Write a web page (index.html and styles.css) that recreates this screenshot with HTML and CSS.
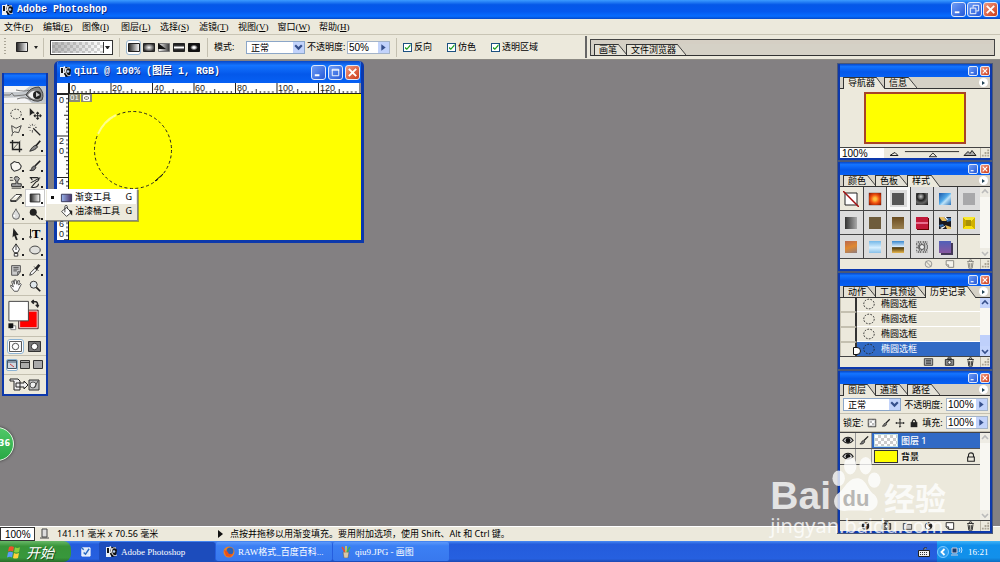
FILE: index.html
```html
<!DOCTYPE html>
<html lang="zh-CN">
<head>
<meta charset="utf-8">
<title>Adobe Photoshop</title>
<link rel="stylesheet" href="styles.css">
</head>
<body>
<svg class="defs" aria-hidden="true">
  <defs>
    <linearGradient id="bw"><stop offset="0" stop-color="#222"/><stop offset="1" stop-color="#fff"/></linearGradient>
    <linearGradient id="wb"><stop offset="0" stop-color="#fff"/><stop offset="1" stop-color="#333"/></linearGradient>
    <linearGradient id="blu"><stop offset="0" stop-color="#9ab8f0"/><stop offset="1" stop-color="#483068"/></linearGradient>
    <linearGradient id="refl" x2="0" y2="1"><stop offset="0" stop-color="#111"/><stop offset=".25" stop-color="#333"/><stop offset=".5" stop-color="#fff"/><stop offset=".75" stop-color="#333"/><stop offset="1" stop-color="#111"/></linearGradient>
    <radialGradient id="rad"><stop offset="0" stop-color="#fff"/><stop offset="1" stop-color="#333"/></radialGradient>
    <radialGradient id="dia"><stop offset=".2" stop-color="#fff"/><stop offset=".7" stop-color="#111"/></radialGradient>
    <pattern id="check" width="6" height="6" patternUnits="userSpaceOnUse"><path fill="#fff" d="M0 0h6v6H0z"/><path fill="#bbb" d="M0 0h3v3H0zM3 3h3v3H3z"/></pattern>
    <pattern id="ticks" width="41.5" height="11" patternUnits="userSpaceOnUse"><path stroke="#222" fill="none" d="M.5 0v11M4.6 8v3M8.8 8v3M12.9 8v3M17 8v3M21.2 6v5M25.3 8v3M29.5 8v3M33.6 8v3M37.8 8v3"/></pattern>
    <pattern id="vticks" width="12" height="41.5" patternUnits="userSpaceOnUse"><path stroke="#222" fill="none" d="M0 .5h12M9 4.6h3M9 8.8h3M9 12.9h3M9 17h3M7 21.2h5M9 25.3h3M9 29.5h3M9 33.6h3M9 37.8h3"/></pattern>
  </defs>
  <symbol id="ps" viewBox="0 0 12 12"><path fill="#e8edf5" d="M0 1h5v10H0z"/><path fill="#111" d="M1 2h2v5H1zM5 1h4l2 3-1 6-4 1-2-3z"/><path fill="none" stroke="#fff" d="M10 2C6 1 5 4 6 7s3 3 5 2M4 0l2 4-2 3"/><circle cx="8" cy="5.500" r="1.300" fill="#b8d0f0"/></symbol>
  <symbol id="ellipse" viewBox="0 0 16 16"><ellipse cx="8" cy="8" rx="6" ry="5.500" fill="none" stroke="#222" stroke-dasharray="2 1.500"/></symbol>
  <symbol id="move" viewBox="0 0 16 16"><path fill="#222" d="M2 1l6 6-3 .3L2 10z"/><path stroke="#222" stroke-width="1.200" d="M7 10h8M11 6v8M9.500 7.500L11 6l1.500 1.500M9.500 12.500L11 14l1.500-1.500M8.500 8.500L7 10l1.500 1.500M13.500 8.500L15 10l-1.500 1.500" fill="none"/></symbol>
  <symbol id="lasso" viewBox="0 0 16 16"><path fill="none" stroke="#333" d="M4 11L3 3l5 3 6-3-3 8-5-1-2 2-1 3"/></symbol>
  <symbol id="wand" viewBox="0 0 16 16"><path stroke="#222" stroke-width="1.500" d="M6 6l8 8"/><path stroke="#444" d="M5 1v2M5 8v3M0 5h3M8 5h2M2 2l1 1M8 2l-1 1M2 9l1-1"/></symbol>
  <symbol id="crop" viewBox="0 0 16 16"><path fill="none" stroke="#222" stroke-width="1.600" d="M4 1v11h11M1 4h11v11"/><path stroke="#444" d="M4 12l9-10"/></symbol>
  <symbol id="slice" viewBox="0 0 16 16"><path fill="#888" stroke="#222" d="M2 14c2-4 4-6 7-7l2 2c-2 3-5 4-9 5z"/><path stroke="#222" stroke-width="2" d="M9 8l5-6"/></symbol>
  <symbol id="heal" viewBox="0 0 16 16"><path fill="#f7f5ef" stroke="#333" stroke-width="1.200" d="M2 6l4-3 3 1 2 0 3 4-1 3-3 2-4 1-3-3z"/></symbol>
  <symbol id="brush" viewBox="0 0 16 16"><path stroke="#222" stroke-width="2" d="M14 2L8 8"/><path fill="#777" stroke="#222" d="M2 13c3 0 1-4 5-5l2 1c0 3-3 5-7 4z"/></symbol>
  <symbol id="stamp" viewBox="0 0 16 16"><path fill="#aaa" stroke="#222" d="M3 13h11v-3h-4V7l2-3-2-2H7L6 4l2 3v3H3zM1 3h3M1 6h4M3 15h11"/></symbol>
  <symbol id="hist" viewBox="0 0 16 16"><path fill="none" stroke="#222" stroke-width="1.200" d="M2 3h9c3 1 1 4-2 5l-5 6c5 1 8-1 8-4M14 3L3 9M3 3l2 3"/></symbol>
  <symbol id="eraser" viewBox="0 0 16 16"><path fill="#fff" stroke="#222" d="M2 10l6-6h6l-6 7H2zM2 10v2h6l6-6V4M8 11v1"/></symbol>
  <symbol id="grad" viewBox="0 0 16 16"><path fill="url(#bw)" stroke="#222" d="M2.500 3.500h11v9h-11z"/></symbol>
  <symbol id="blur" viewBox="0 0 16 16"><path fill="#ddd" stroke="#555" d="M8 2c1 4 4 5 4 8a4 4 0 0 1-8 0c0-3 3-5 4-8z"/><path stroke="#fff" stroke-width="2" d="M6 9v2"/></symbol>
  <symbol id="dodge" viewBox="0 0 16 16"><circle cx="6" cy="6" r="4" fill="#222"/><path stroke="#222" stroke-width="1.500" d="M9 9l5 5"/></symbol>
  <symbol id="path" viewBox="0 0 16 16"><path fill="#222" d="M5 1l6 8-3 .5 2 5-2 .5-2-5-2 2z"/></symbol>
  <symbol id="pen" viewBox="0 0 16 16"><path fill="#fff" stroke="#222" d="M8 1L4 7l2 4h4l2-4zM6 12h4v3H6zM8 1v7"/></symbol>
  <symbol id="shape" viewBox="0 0 16 16"><ellipse cx="8" cy="8" rx="6" ry="4.500" fill="#e0e0dc" stroke="#333"/></symbol>
  <symbol id="note" viewBox="0 0 16 16"><path fill="#ccc" stroke="#444" d="M3 3h10v7l-3 4H3zM10 14v-4h3M5 5h6M5 7h6M5 9h4"/></symbol>
  <symbol id="drop" viewBox="0 0 16 16"><path fill="#fff" stroke="#222" d="M2 14l1-3 5-5 2 2-5 5z"/><path stroke="#222" stroke-width="3" d="M9 7l4-5"/><path stroke="#222" d="M7 4l5 5"/></symbol>
  <symbol id="hand" viewBox="0 0 16 16"><path fill="#fff" stroke="#444" d="M6 14L2 9V7l3 2-2-6 2-1 1 4V1h2l1 5 1-4h2l-1 5 2-2 1 1-3 6-1 2z"/></symbol>
  <symbol id="zoom" viewBox="0 0 16 16"><circle cx="6.500" cy="6.500" r="4" fill="#e0e8ec" stroke="#222"/><path stroke="#222" stroke-width="2" d="M9.500 9.500L14 14"/></symbol>
  <symbol id="bucket" viewBox="0 0 16 16"><path fill="#fff" stroke="#222" d="M2 8l6-5 6 6-6 5zM6 9V2C6 0 9 0 9 2v3"/><path fill="#222" d="M11 6l4 1v6l-2-2z"/></symbol>
  <symbol id="trash" viewBox="0 0 12 12"><path fill="none" stroke="#333" stroke-width="1.200" d="M2 3h8M4 3l1-2h2l1 2M3 4l1 7h4l1-7M5 5v5M7 5v5"/></symbol>
  <symbol id="page" viewBox="0 0 12 12"><path fill="#fff" stroke="#333" stroke-width="1.200" d="M2 2h9v8H5L2 7zM2 7h3v3"/></symbol>
  <symbol id="none" viewBox="0 0 12 12"><circle cx="6" cy="6" r="4" fill="none" stroke="#888"/><path stroke="#888" d="M3 3l6 6"/></symbol>
  <symbol id="camera" viewBox="0 0 12 12"><path fill="#888" stroke="#222" d="M1 3h10v7H1zM4 1h4v2H4z"/><circle cx="6" cy="6.500" r="2" fill="#fff" stroke="#222"/></symbol>
  <symbol id="doc" viewBox="0 0 12 12"><path fill="#aaa" stroke="#333" d="M1 2h10v8H1zM3 4h6M3 6h6M3 8h6"/></symbol>
  <symbol id="folder" viewBox="0 0 12 12"><path fill="#ccc" stroke="#333" d="M1 3h4l1 1h5v6H1z"/></symbol>
  <symbol id="fx" viewBox="0 0 12 12"><circle cx="6" cy="6" r="4.500" fill="#222"/><path stroke="#fff" d="M4 9l3-6h2M4 5h4" fill="none"/></symbol>
  <symbol id="half" viewBox="0 0 12 12"><circle cx="6" cy="6" r="4" fill="#fff" stroke="#222"/><path fill="#222" d="M3 3a4 4 0 0 1 6 6z"/></symbol>
  <symbol id="lock" viewBox="0 0 12 12"><path fill="none" stroke="#222" stroke-width="1.300" d="M3 6V4c0-4 6-4 6 0v2M2 6h8v5H2z"/></symbol>
  <symbol id="eye" viewBox="0 0 14 12"><path fill="#ccc" stroke="#222" stroke-width="1.300" d="M1 6c3-5 9-5 12 0-3 4-9 4-12 0z"/><circle cx="7" cy="6" r="2.800" fill="#111"/></symbol>
  <symbol id="slant" viewBox="0 0 10 12" preserveAspectRatio="none"><path fill="currentColor" d="M0 0l10 12H0z"/><path stroke="#333" d="M0 0l10 12" fill="none"/></symbol>
  <symbol id="min" viewBox="0 0 14 14"><path fill="#fff" d="M3 9h5v2H3z"/></symbol>
  <symbol id="max" viewBox="0 0 14 14"><path fill="none" stroke="#fff" d="M3.500 3.500h7v7h-7zM3 4.500h8"/></symbol>
  <symbol id="rest" viewBox="0 0 14 14"><path fill="none" stroke="#fff" d="M5.500 5V2.500h6v6H9M2.500 5.500h6v6h-6z"/></symbol>
  <symbol id="close" viewBox="0 0 14 14"><path stroke="#fff" stroke-width="2" d="M3 3l8 8M11 3l-8 8"/></symbol>
  <symbol id="chev" viewBox="0 0 10 10"><path fill="none" stroke="#36508c" stroke-width="2" d="M2 3l3 3 3-3"/></symbol>
  <symbol id="up" viewBox="0 0 10 10"><path fill="none" stroke="currentColor" stroke-width="1.600" d="M2 6l3-3 3 3"/></symbol>
  <symbol id="right" viewBox="0 0 10 10"><path fill="#36508c" d="M3 2l4 3-4 3z"/></symbol>
  <symbol id="grip" viewBox="0 0 10 10"><path fill="#aaa494" d="M7 1h2v2H7zM4 4h2v2H4zM7 4h2v2H7zM1 7h2v2H1zM4 7h2v2H4zM7 7h2v2H7z"/></symbol>
</svg>

<div class="app">
  <header class="titlebar">
    <svg class="i12"><use href="#ps"/></svg><h1>Adobe Photoshop</h1>
    <span class="winbtns"><button aria-label="最小化"><svg><use href="#min"/></svg></button><button aria-label="还原"><svg><use href="#rest"/></svg></button><button class="x" aria-label="关闭"><svg><use href="#close"/></svg></button></span>
  </header>
  <nav class="menu">
    <button>文件(<u>F</u>)</button><button>编辑(<u>E</u>)</button><button>图像(<u>I</u>)</button><button>图层(<u>L</u>)</button><button>选择(<u>S</u>)</button><button>滤镜(<u>T</u>)</button><button>视图(<u>V</u>)</button><button>窗口(<u>W</u>)</button><button>帮助(<u>H</u>)</button>
  </nav>
  <div class="options">
    <div class="opts">
      <i class="dots"></i>
      <button class="preset" aria-label="渐变工具"><svg class="i16"><use href="#grad"/></svg><i class="caret"></i></button>
      <i class="sep"></i>
      <button class="picker" aria-label="渐变"><i class="ramp"></i><span><i class="caret"></i></span></button>
      <i class="sep"></i>
      <div class="kinds">
        <button class="on" aria-label="线性"><svg viewBox="0 0 12 9"><path fill="url(#bw)" stroke="#222" d="M.5.5h11v8H.5z"/></svg></button>
        <button aria-label="径向"><svg viewBox="0 0 12 9"><path fill="url(#rad)" stroke="#222" d="M.5.5h11v8H.5z"/></svg></button>
        <button aria-label="角度"><svg viewBox="0 0 12 9"><path fill="url(#wb)" stroke="#777" d="M.5.5h11v8H.5z"/><path fill="#111" d="M0 0l8 6H0z"/></svg></button>
        <button aria-label="对称"><svg viewBox="0 0 12 9"><path fill="url(#refl)" stroke="#222" d="M.5.5h11v8H.5z"/></svg></button>
        <button aria-label="菱形"><svg viewBox="0 0 12 9"><path fill="url(#dia)" stroke="#111" d="M.5.5h11v8H.5z"/></svg></button>
      </div>
      <i class="sep"></i>
      <label class="lab" for="mode">模式:</label>
      <span class="select wide"><select id="mode"><option>正常</option></select><svg><use href="#chev"/></svg></span>
      <label class="lab op" for="opac">不透明度:</label>
      <span class="num"><input id="opac" value="50%"><button aria-label="滑块"><svg><use href="#right"/></svg></button></span>
      <i class="sep"></i>
      <label class="tick"><input type="checkbox" checked>反向</label>
      <label class="tick"><input type="checkbox" checked>仿色</label>
      <label class="tick"><input type="checkbox" checked>透明区域</label>
    </div>
    <div class="well"><div class="tabs"><button>画笔</button><svg><use href="#slant"/></svg><button>文件浏览器</button><svg><use href="#slant"/></svg></div></div>
  </div>
  <main class="desk"></main>
  <footer class="status">
    <input aria-label="缩放" value="100%">
    <svg class="i12"><path fill="#ddd" stroke="#444" d="M3 1h5v8H3zM1 10h9"/></svg>
    <span class="size">141.11 毫米 x 70.56 毫米</span>
    <i class="play"></i>
    <span>点按并拖移以用渐变填充。要用附加选项，使用 Shift、Alt 和 Ctrl 键。</span>
  </footer>
  <div class="taskbar">
    <button class="start"><svg viewBox="0 0 14 14"><path fill="#f0522c" d="M2 2q2-1.500 5 0L6 6.500q-2-1.500-5 0z"/><path fill="#8ad13c" d="M8 2.300q2 1.500 5 0L12 7q-3 1-5 0z"/><path fill="#5a9cf8" d="M1 7.500q2-1.500 5 0l-1 5q-2-1.500-5 0z"/><path fill="#ffd23c" d="M7 8q2 1.500 5 0l-1 5q-3 1-5 0z"/></svg>开始</button>
    <button class="quick" aria-label="显示桌面"><svg viewBox="0 0 12 12"><path fill="#dbe8fa" stroke="#fff" d="M2 2h9v9H2z"/><path stroke="#2868c0" stroke-width="1.500" fill="none" d="M4 7l2 2 4-6M1 1l3 3"/></svg></button>
    <button class="task active"><svg class="i12"><use href="#ps"/></svg>Adobe Photoshop</button>
    <button class="task"><svg class="i12" viewBox="0 0 12 12"><circle cx="6" cy="6" r="5.500" fill="#f08020"/><circle cx="7" cy="5" r="3.500" fill="#2a62b8"/><path fill="#e8501c" d="M1 4l3 1 2 3 4 0-3 3-4-1z"/></svg>RAW格式_百度百科...</button>
    <button class="task"><svg class="i12" viewBox="0 0 12 12"><path fill="#d8c8a8" stroke="#555" stroke-width=".5" d="M3 6h6l-1 6H4z"/><path stroke-width="1.500" stroke="#e85030" d="M2 1l3 5"/><path stroke-width="1.500" stroke="#f0d040" d="M6 0v6"/><path stroke-width="1.500" stroke="#40b050" d="M10 1L7 6"/></svg>qiu9.JPG - 画图</button>
    <svg class="kbd" viewBox="0 0 12 10"><path fill="#eee" stroke="#222" d="M.5 3.500h11v6H.5zM6 3V1h3"/><path stroke="#333" stroke-dasharray="1 1" d="M2 5.500h8M2 7.500h8"/></svg>
    <div class="tray"><button aria-label="展开"><svg viewBox="0 0 12 12"><circle cx="6" cy="6" r="5.500" fill="#2a9cf0" stroke="#7cc8ff"/><path fill="none" stroke="#fff" stroke-width="1.800" d="M7.500 3l-3 3 3 3"/></svg></button><svg class="i12" viewBox="0 0 12 12"><path fill="#1c3c6c" stroke="#ccd" d="M1 2h5v5H1zM0 9h7"/><path fill="none" stroke="#bfe0ff" d="M8 2q2 2 0 4M10 1q2 3 0 6"/></svg><time>16:21</time></div>
  </div>

  <section class="win docwin">
    <header><svg class="i12"><use href="#ps"/></svg><h2>qiu1 @ 100% (图层 1, RGB)</h2>
      <span class="winbtns"><button aria-label="最小化"><svg><use href="#min"/></svg></button><button aria-label="最大化"><svg><use href="#max"/></svg></button><button class="x" aria-label="关闭"><svg><use href="#close"/></svg></button></span></header>
    <div class="docbody">
      <i class="corner"></i>
      <svg class="hruler"><rect width="100%" height="11" fill="url(#ticks)"/><g><text x="2" y="8">0</text><text x="43" y="8">20</text><text x="85" y="8">40</text><text x="126" y="8">60</text><text x="168" y="8">80</text><text x="209" y="8">100</text><text x="251" y="8">120</text></g></svg>
      <svg class="vruler"><rect width="12" height="100%" fill="url(#vticks)"/><g><text x="2" y="9">0</text><text x="2" y="50">2</text><text x="2" y="60">0</text><text x="2" y="91">4</text><text x="2" y="101">0</text><text x="2" y="133">6</text><text x="2" y="143">0</text></g></svg>
      <div class="canvas"><span class="slice"><b>01</b><svg viewBox="0 0 11 8"><path fill="#8c8c78" d="M0 0h11v8H0z"/><path fill="none" stroke="#fff" d="M2.500 1.500h6v5h-6zM3 2l5 4M8 2L3 6"/></svg></span>
        <svg class="sel" viewBox="0 0 80 80"><circle cx="40" cy="40" r="38.500" fill="none" stroke="#222" stroke-dasharray="3 2.500"/><path fill="none" stroke="#ffff8c" stroke-width="2" d="M5 24Q11 11 23 5"/><path stroke="#111" d="M62 71l8-7"/></svg></div>
    </div>
  </section>

  <section class="win toolbox" aria-label="工具">
    <header></header>
    <svg class="banner" viewBox="0 0 42 17" preserveAspectRatio="none"><path fill="#c4c8cc" d="M0 0h42v17H0z"/><path fill="#f4f4f4" d="M0 0h26l-8 6H0zM0 12l20-1 8 6H0z"/><path fill="none" stroke="#777" d="M0 9h6l2-2 2 3 10-1 6-2M12 4q9 2 13 0M13 13q8-3 14 1"/><path fill="#888" stroke="#444" d="M22 9Q26 1 35 1q6 6 3 13-8 4-16-5z"/><path fill="#f2f2f2" d="M24 9q4-5 8-4l-1 8q-4 0-7-4z"/><circle cx="33" cy="9" r="4" fill="#222"/><path fill="#ccc" d="M32 6l4 3-4 2z"/></svg>
    <div class="tools">
      <button class="m" aria-label="椭圆选框"><svg><use href="#ellipse"/></svg></button><button aria-label="移动"><svg><use href="#move"/></svg></button>
      <button class="m" aria-label="套索"><svg><use href="#lasso"/></svg></button><button aria-label="魔棒"><svg><use href="#wand"/></svg></button>
      <button aria-label="裁切"><svg><use href="#crop"/></svg></button><button class="m" aria-label="切片"><svg><use href="#slice"/></svg></button>
    </div>
    <div class="tools">
      <button class="m" aria-label="修复"><svg><use href="#heal"/></svg></button><button class="m" aria-label="画笔"><svg><use href="#brush"/></svg></button>
      <button class="m" aria-label="图章"><svg><use href="#stamp"/></svg></button><button class="m" aria-label="历史画笔"><svg><use href="#hist"/></svg></button>
      <button class="m" aria-label="橡皮"><svg><use href="#eraser"/></svg></button><button class="m on" aria-label="渐变"><svg><use href="#grad"/></svg></button>
      <button class="m" aria-label="模糊"><svg><use href="#blur"/></svg></button><button class="m" aria-label="减淡"><svg><use href="#dodge"/></svg></button>
    </div>
    <div class="tools">
      <button class="m" aria-label="路径"><svg><use href="#path"/></svg></button><button class="m type" aria-label="文字"><svg viewBox="0 0 3 12"><path stroke="#222" d="M1.500 1v8M0 9h3M1 10h1"/></svg>T</button>
      <button class="m" aria-label="钢笔"><svg><use href="#pen"/></svg></button><button class="m" aria-label="椭圆"><svg><use href="#shape"/></svg></button>
    </div>
    <div class="tools">
      <button class="m" aria-label="注释"><svg><use href="#note"/></svg></button><button class="m" aria-label="吸管"><svg><use href="#drop"/></svg></button>
      <button aria-label="抓手"><svg><use href="#hand"/></svg></button><button aria-label="缩放"><svg><use href="#zoom"/></svg></button>
    </div>
    <svg class="swatches" viewBox="0 0 42 41"><path fill="#f00" stroke="#444" d="M14.500 14.500h20v19h-20z"/><path fill="none" stroke="#ddd" d="M15.500 15.500h18v17h-18z"/><path fill="#fff" stroke="#444" d="M4.500 5.500h20v20h-20z"/><path fill="#fff" stroke="#888" d="M8.500 30.500h3v4h-5v-2z"/><path fill="#111" d="M4 28h5v5H4z"/><path fill="none" stroke="#222" stroke-width="1.500" d="M29 6h3q2 0 2 4M30 4l-2 2 2 2M32 9l2 2 1-2"/></svg>
    <div class="masks"><button class="on" aria-label="标准"><svg viewBox="0 0 14 12"><path fill="#fff" stroke="#444" d="M.5.5h13v11H.5z"/><circle cx="7" cy="6" r="3.500" fill="#fff" stroke="#444"/></svg></button><button aria-label="快速蒙版"><svg viewBox="0 0 14 12"><path fill="#777" stroke="#222" d="M.5.5h13v11H.5z"/><circle cx="7" cy="6" r="3.500" fill="#fff" stroke="#222"/></svg></button></div>
    <div class="screens"><button class="on" aria-label="标准屏幕"><svg viewBox="0 0 10 10"><path fill="#d0d8e0" stroke="#456" d="M.5.5h9v8h-9z"/><path fill="#8898a8" d="M1 1h8v2H1z"/><path stroke="#c44" d="M3 4l4 3"/></svg></button><button aria-label="带菜单"><svg viewBox="0 0 10 10"><path fill="#aaa" stroke="#333" d="M.5.5h9v8h-9zM1 2.500h8"/></svg></button><button aria-label="全屏"><svg viewBox="0 0 10 10"><path fill="#aaa" stroke="#333" d="M.5.5h9v8h-9z"/></svg></button></div>
    <button class="jump" aria-label="跳转"><svg viewBox="0 0 32 14"><path fill="#eee" stroke="#222" d="M1 1h8l2 2v9H5V3H1zM7 5h8V3l4 4-4 4V9H7z"/><path fill="#bbb" stroke="#333" d="M20 2h10v10H20z"/><circle cx="24" cy="7" r="3" fill="#eee" stroke="#555"/><path stroke="#444" d="M29 3l-4 7"/></svg></button>
  </section>

  <ul class="flyout">
    <li class="on"><i></i><svg viewBox="0 0 14 12"><path fill="url(#blu)" stroke="#335" d="M1.500 2.500h11v8h-11z"/></svg><button>渐变工具</button><kbd>G</kbd></li>
    <li><i></i><svg><use href="#bucket"/></svg><button>油漆桶工具</button><kbd>G</kbd></li>
  </ul>

  <aside class="dock">
    <section class="win">
      <header><span class="winbtns"><button aria-label="最小化"><svg><use href="#min"/></svg></button><button class="x" aria-label="关闭"><svg><use href="#close"/></svg></button></span></header>
      <div class="tabs"><button class="on">导航器</button><svg class="on"><use href="#slant"/></svg><button>信息</button><svg><use href="#slant"/></svg><i class="more"></i></div>
      <div class="preview"><i></i></div>
      <div class="foot nav"><input aria-label="缩放" value="100%"><svg class="hill" viewBox="0 0 14 9"><path fill="none" stroke="#222" d="M3 7h8L8 4 6 5z"/></svg><svg class="slide" viewBox="0 0 60 10"><path fill="none" stroke="#222" d="M1 3.500h58M27 9l4-4 4 4z"/></svg><svg class="hill" viewBox="0 0 14 9"><path fill="#aaa" stroke="#222" d="M1 7l4-4 2 2 2-3 4 5z"/></svg><svg class="gr"><use href="#grip"/></svg></div>
    </section>

    <section class="win">
      <header><span class="winbtns"><button aria-label="最小化"><svg><use href="#min"/></svg></button><button class="x" aria-label="关闭"><svg><use href="#close"/></svg></button></span></header>
      <div class="tabs"><button>颜色</button><svg><use href="#slant"/></svg><button>色板</button><svg><use href="#slant"/></svg><button class="on">样式</button><svg class="on"><use href="#slant"/></svg><i class="more"></i></div>
      <div class="scrolled">
        <div class="styles">
          <button class="blank" aria-label="无"><svg viewBox="0 0 16 16"><path fill="#fff" stroke="#222" d="M2 2h12v12H2z"/><path stroke="#a01010" stroke-width="1.500" d="M0 0l16 16"/></svg></button>
          <button aria-label="红"><i class="s1"></i></button><button class="hot" aria-label="灰"><i class="s2"></i></button><button aria-label="黑"><i class="s3"></i></button><button aria-label="蓝"><i class="s4"></i></button><button aria-label="浅灰"><i class="s5"></i></button>
          <button aria-label="金属"><i class="s6"></i></button><button aria-label="褐"><i class="s7"></i></button><button aria-label="铜"><i class="s8"></i></button><button aria-label="格子"><i class="s9"></i></button><button aria-label="迷彩"><svg viewBox="0 0 12 12"><path fill="#181820" d="M0 0h12v12H0z"/><path fill="#e8c060" d="M0 0h5l3 4-5 0zM6 8l6 2v2H8z"/><path fill="#3870b0" d="M7 1h5v3L8 5zM0 8l4-1 1 2-4 1z"/><path fill="#fff" d="M5 0h2l2 3H8zM1 11l5-2v1l-3 2z"/></svg></button><button aria-label="黄"><i class="s11"></i></button>
          <button aria-label="日落"><i class="s12"></i></button><button aria-label="天空"><i class="s13"></i></button><button aria-label="铬"><i class="s14"></i></button><button aria-label="噪点"><svg viewBox="0 0 12 12"><path fill="#777" d="M0 0h12v12H0z"/><path fill="none" stroke="#fff" stroke-dasharray="2 1 1 1" d="M0 1h12M1 3h11M0 5h3M9 5h3M0 8h3M9 7h3M1 9h11M0 11h12"/><circle cx="6" cy="6" r="2.500" fill="#eee" stroke="#555"/></svg></button><button aria-label="紫"><i class="s16"></i></button><span class="blank"></span>
        </div>
        <div class="scroll off"><svg><use href="#up"/></svg><svg class="dn"><use href="#up"/></svg></div>
      </div>
      <div class="foot"><svg><use href="#none"/></svg><svg class="dim"><use href="#page"/></svg><svg class="dim"><use href="#trash"/></svg><svg class="gr"><use href="#grip"/></svg></div>
    </section>

    <section class="win">
      <header><span class="winbtns"><button aria-label="最小化"><svg><use href="#min"/></svg></button><button class="x" aria-label="关闭"><svg><use href="#close"/></svg></button></span></header>
      <div class="tabs"><button>动作</button><svg><use href="#slant"/></svg><button>工具预设</button><svg><use href="#slant"/></svg><button class="on">历史记录</button><svg class="on"><use href="#slant"/></svg><i class="more"></i></div>
      <div class="scrolled">
        <ul class="history">
          <li><i></i><svg><use href="#ellipse"/></svg>椭圆选框</li>
          <li><i></i><svg><use href="#ellipse"/></svg>椭圆选框</li>
          <li><i></i><svg><use href="#ellipse"/></svg>椭圆选框</li>
          <li class="on"><i></i><svg><use href="#ellipse"/></svg>椭圆选框</li>
        </ul>
        <div class="scroll"><svg><use href="#up"/></svg><i></i><svg class="dn"><use href="#up"/></svg></div>
      </div>
      <div class="foot"><svg><use href="#doc"/></svg><svg><use href="#camera"/></svg><svg><use href="#trash"/></svg><svg class="gr"><use href="#grip"/></svg></div>
    </section>

    <section class="win">
      <header><span class="winbtns"><button aria-label="最小化"><svg><use href="#min"/></svg></button><button class="x" aria-label="关闭"><svg><use href="#close"/></svg></button></span></header>
      <div class="tabs"><button class="on">图层</button><svg class="on"><use href="#slant"/></svg><button>通道</button><svg><use href="#slant"/></svg><button>路径</button><svg><use href="#slant"/></svg><i class="more"></i></div>
      <div class="row"><span class="select"><select aria-label="混合模式"><option>正常</option></select><svg><use href="#chev"/></svg></span><label for="lop">不透明度:</label><span class="num"><input id="lop" value="100%"><button aria-label="滑块"><svg><use href="#right"/></svg></button></span></div>
      <div class="row"><span>锁定:</span><span class="locks"><svg viewBox="0 0 12 12"><path fill="url(#check)" stroke="#333" d="M1.500 1.500h9v9h-9z"/></svg><svg viewBox="0 0 16 16"><use href="#brush"/></svg><svg viewBox="0 0 12 12"><path stroke="#222" fill="none" stroke-width="1.200" d="M1 6h10M6 1v10M5 2l1-1 1 1M5 10l1 1 1-1M2 5L1 6l1 1M10 5l1 1-1 1"/></svg><svg viewBox="0 0 12 12"><path fill="#222" d="M2 5h8v6H2z"/><path fill="none" stroke="#222" stroke-width="1.500" d="M4 6V4q2-4 4 0v2"/></svg></span><label for="fill">填充:</label><span class="num"><input id="fill" value="100%"><button aria-label="滑块"><svg><use href="#right"/></svg></button></span></div>
      <div class="scrolled lay">
        <ul class="layers">
          <li class="on"><span><svg><use href="#eye"/></svg></span><span><svg><use href="#brush"/></svg></span><i class="thumb clear"></i><b>图层 1</b></li>
          <li><span><svg><use href="#eye"/></svg></span><span></span><i class="thumb"></i><b>背景</b><svg><use href="#lock"/></svg></li>
        </ul>
        <div class="scroll off"><svg><use href="#up"/></svg><svg class="dn"><use href="#up"/></svg></div>
      </div>
      <div class="foot six"><svg><use href="#fx"/></svg><svg><use href="#camera"/></svg><svg><use href="#folder"/></svg><svg><use href="#half"/></svg><svg><use href="#page"/></svg><svg><use href="#trash"/></svg><svg class="gr"><use href="#grip"/></svg></div>
    </section>
  </aside>

  <div class="ball">36</div>

  <div class="mark">
    <div class="brand"><span>Bai</span><span class="paw"><svg viewBox="0 0 52 58"><g fill="#fff"><ellipse cx="8" cy="23" rx="6.500" ry="8"/><ellipse cx="20" cy="10" rx="6.500" ry="9"/><ellipse cx="36" cy="10" rx="6.500" ry="9"/><ellipse cx="45" cy="25" rx="6.500" ry="8"/><path d="M27 23c10 0 10 11 18 17 7 7 3 17-7 17-6 0-16-1-24 0-10 0-14-10-8-17 8-5 11-17 21-17z"/></g></svg><b>du</b></span><span class="cn">经验</span></div>
    <div class="url">jingyan.baidu.com</div>
  </div>
</div>
</body>
</html>
```
FILE: styles.css
```css
* { box-sizing: border-box; }
body { margin: 0; font: 9px/12px "Noto Sans", "Noto Sans CJK SC", sans-serif; color: #000; }
button, input, select { font: inherit; color: inherit; margin: 0; padding: 0; border: 0; background: none; border-radius: 0; min-width: 0; }
ul { list-style: none; margin: 0; padding: 0; }
h1, h2 { margin: 0; font: bold 10px/12px "Liberation Mono", "Noto Sans CJK SC", monospace; color: #fff; text-shadow: 1px 1px #0a2a80; white-space: nowrap; }
svg { display: block; flex: none; }
.defs { position: absolute; width: 0; height: 0; }
.i12 { width: 12px; height: 12px; }
.i16 { width: 16px; height: 16px; }

.app { position: relative; display: flex; flex-direction: column; min-height: 100vh; overflow: hidden; background: #ece9dc; }
.desk { flex: 1; background: #838082; }

.titlebar { display: flex; align-items: center; gap: 3px; height: 19px; padding: 0 2px; background: linear-gradient(#3c9cff, #0558e8 25%, #0458ee 60%, #066cff 85%, #0448c8); }
.winbtns { display: flex; gap: 1px; margin-left: auto; }
.winbtns button { width: 15px; height: 15px; border: 1px solid #dfe9fb; border-radius: 3px; background: linear-gradient(135deg, #6f9df5, #2458d8); }
.winbtns .x { background: linear-gradient(135deg, #f09a80, #cc3a18); }
.winbtns svg { width: 100%; height: 100%; }

.menu { display: flex; gap: 9px; height: 15px; padding: 0 4px; font-family: "Liberation Serif", "Noto Sans CJK SC", serif; }
.menu button { white-space: nowrap; min-width: 30px; text-align: left; }

.options { display: flex; height: 26px; border-top: 1px solid #c8c4b4; border-bottom: 1px solid #8c8a84; align-items: center; }
.opts { display: flex; align-items: center; width: 587px; flex: none; height: 22px; padding-left: 4px; border-right: 2px solid #666; }
.dots { width: 2px; height: 18px; background: repeating-linear-gradient(#aaa697 0 1px, transparent 1px 3px); }
.sep { width: 1px; height: 19px; background: #c4c0b0; margin: 0 6px; }
.caret { display: block; border: 2px solid transparent; border-top: 3px solid #222; border-bottom: 0; width: 5px; }
.preset { display: flex; align-items: center; gap: 4px; padding-left: 8px; width: 31px; }
.picker { display: flex; width: 63px; height: 15px; border: 1px solid #333; background: #fff; padding: 1px; }
.ramp { flex: 1; background: linear-gradient(90deg, #999b, #fff6), repeating-conic-gradient(#bbb 0 25%, #fff 0 50%) 0 0 / 6px 6px; }
.picker span { width: 8px; border-left: 1px solid #333; display: grid; place-items: center; }
.kinds { display: flex; }
.kinds button { width: 15px; height: 15px; padding: 0; border: 1px solid transparent; border-radius: 3px; display: grid; place-items: center; }
.kinds .on { border-color: #98b4cc; background: #fff; }
.kinds svg { width: 12px; height: 9px; }
.lab { width: 32px; white-space: nowrap; }
.lab.op { width: 38px; margin-left: 2px; margin-right: 2px; }
.select { position: relative; display: flex; width: 59px; height: 13px; border: 1px solid #8ba6c8; background: #fff; }
.select select { appearance: none; width: 100%; padding-left: 4px; line-height: 11px; }
.select svg { position: absolute; right: 0; top: 0; width: 11px; height: 11px; background: #c2d3fb; pointer-events: none; }
.num { display: flex; width: 43px; height: 13px; border: 1px solid #a4b4c8; background: #fff; }
.num input, .nav input, .status input { font-family: "Liberation Sans", sans-serif; font-size: 10px; }
.num input { flex: 1; width: 0; line-height: 11px; padding-left: 1px; }
.num button { width: 11px; background: #c2d3fb; }
.num svg { width: 11px; height: 11px; }
.tick { display: flex; align-items: center; gap: 2px; margin-right: 15px; white-space: nowrap; }
.tick input { appearance: none; width: 9px; height: 9px; border: 1px solid #1c5180; background: #fff; display: grid; place-items: center; }
.tick input:checked::before { content: ""; width: 6px; height: 6px; background: #21a121; clip-path: polygon(0 40%, 40% 70%, 100% 0, 100% 35%, 40% 100%, 0 70%); }
.well { flex: 1; height: 17px; margin: 0 5px 0 3px; border: 1px solid #444; border-bottom: 0; background: #d5cfc4; display: flex; align-items: flex-end; }

.tabs { display: flex; height: 12px; padding-left: 3px; background: #d5d1c6; border-bottom: 1px solid #333; width: 100%; }
.tabs > button { height: 11px; line-height: 10px; padding: 0 1px 0 4px; white-space: nowrap; border-left: 1px solid #333; border-top: 1px solid #333; background: #e4e1d6; }
.tabs > svg { width: 9px; height: 11px; color: #e4e1d6; margin-right: -1px; }
.tabs > .on { background: #ece9dc; height: 12px; color: #ece9dc; }
.tabs > svg.on { background: none; }
.tabs > button.on { color: #000; padding-bottom: 1px; }
.more { width: 9px; height: 9px; margin: 1px 2px 0 auto; border-radius: 50%; background: #fff; display: grid; place-items: center; }
.more::before { content: ""; border: 2px solid transparent; border-left: 3px solid #245; border-right: 0; }

.win { border: 2px solid #0c38ac; border-top: 0; background: #ece9dc; }
.win > header { display: flex; align-items: center; gap: 4px; height: 13px; background: linear-gradient(#0848c8, #1474ff 20%, #0458ea 60%, #0660f4); }
.dock { position: absolute; right: 8px; top: 64px; width: 154px; display: flex; flex-direction: column; gap: 2px; }
.dock .winbtns { gap: 2px; }
.dock .winbtns button { width: 10px; height: 10px; border-radius: 2px; }
.dock .win { box-shadow: 0 0 0 1px #4a5878; }

.preview { display: grid; place-items: center; height: 58px; }
.preview i { width: 102px; height: 52px; background: #ff0; border: 2px solid #a84428; }
.foot { display: flex; align-items: center; justify-content: flex-end; gap: 10px; height: 11px; border-top: 1px solid #444; }
.foot svg { width: 11px; height: 10px; }
.foot .gr { width: 10px; margin-left: -6px; border-left: 1px solid #bbb6a6; }
.foot .dim { opacity: .5; }
.nav { gap: 3px; }
.nav input { width: 44px; height: 10px; background: #fff; line-height: 10px; padding-left: 2px; }
.nav .slide { flex: 1; width: auto; }
.nav .hill { width: 14px; }
.nav .gr { margin-left: 0; }

.scrolled { display: flex; }
.scroll { width: 10px; flex: none; display: flex; flex-direction: column; justify-content: space-between; background: #f8f7f2; color: #36508c; }
.scroll svg { width: 10px; height: 10px; background: #c4d4fc; }
.scroll.off { color: #bbb; }
.scroll.off svg { background: #eeece4; }
.scroll i { height: 11px; margin-top: auto; background: #bfd0fb; }
.dn { transform: rotate(180deg); }
.styles { flex: 1; display: grid; grid-template-columns: repeat(6, 1fr); grid-auto-rows: 23px; gap: 1px; background: #444; }
.styles > * { background: #dcdcdc; display: grid; place-items: center; }
.styles .blank { background: #ece9dc; }
.styles .hot { box-shadow: inset 0 0 0 3px #f8f8f8; }
.styles svg { width: 12px; height: 12px; }
.styles .blank svg { width: 16px; height: 16px; }
.styles i { width: 12px; height: 12px; }
.styles + .scroll { height: 71px; }
.s1 { background: radial-gradient(#ffc040 15%, #f05010 50%, #801000); box-shadow: 0 0 1px #300; }
.s2 { background: #555; }
.s3 { background: radial-gradient(circle at 40% 30%, #ccc, #222 35%, #666 60%, #111); }
.s4 { background: linear-gradient(135deg, #1c58a8, #50a8e8 45%, #c0e4f8 60%, #2870b8); }
.s5 { background: #a8a8aa; }
.s6 { background: linear-gradient(90deg, #333, #aaa); }
.s7 { background: #6e5c3c; }
.s8 { background: linear-gradient(#6a4c20, #9a8050); }
.s9 { background: linear-gradient(transparent 45%, #e87090 45% 55%, transparent 55%), #c01838; box-shadow: 1px 1px #600; }
.s11 { background: linear-gradient(#a89008, #a89008) center / 5px 6px no-repeat, conic-gradient(from 45deg, #d0b000 25%, #f8e010 0 50%, #c8a800 0 75%, #f8e830 0); }
.s12 { background: linear-gradient(160deg, #b86850, #e08830, #8c7c80); }
.s13 { background: linear-gradient(#74b8e8, #d8f0ff 55%, #88c0e8); }
.s14 { background: linear-gradient(#3888d0, #e8f4ff 50%, #4a3408 55%, #e8b850); }
.s16 { background: linear-gradient(#5060b8, #8858a0); box-shadow: 2px 2px #443858; }

.history { flex: 1; height: 58px; display: flex; flex-direction: column; justify-content: flex-end; overflow: hidden; }
.history li { display: flex; flex: none; align-items: center; height: 15px; border-bottom: 1px solid #fff; padding-right: 4px; line-height: 14px; }
.history i { width: 17px; height: 15px; border: 1px solid #c4c0b0; border-right: 2px solid #333; margin-right: 5px; background: #ece9dc; }
.history svg { width: 14px; height: 14px; margin-right: 5px; }
.history .on { height: 14px; background: #316ac5; color: #fff; border-bottom: 0; }
.history .on i::after { content: ""; display: block; width: 6px; height: 6px; margin: 4px 0 0 12px; border: 1px solid #111; border-radius: 0 50% 50% 0; background: #fff; }

.row { display: flex; align-items: center; justify-content: space-between; height: 18px; padding: 0 2px 0 3px; white-space: nowrap; border-bottom: 1px solid #c4c0b0; }
.row .num { width: 42px; }
.row .select { width: 58px; }
.locks { display: flex; gap: 4px; }
.locks svg { width: 10px; height: 10px; }
.lay { height: 88px; border-top: 1px solid #444; }
.layers { flex: 1; }
.layers li { display: flex; align-items: center; height: 16px; border-bottom: 1px solid #555; }
.layers li > span { width: 16px; height: 15px; display: grid; place-items: center; background: #ece9dc; border-right: 1px solid #999; }
.layers span svg { width: 12px; height: 11px; }
.layers li > svg { width: 10px; height: 10px; margin: 0 4px 0 auto; }
.layers b { font-weight: 500; }
.layers .on { background: #316ac5; color: #fff; }
.thumb { width: 24px; height: 13px; margin: 0 3px 0 2px; background: #ff0; border: 1px solid #333; }
.thumb.clear { background: repeating-conic-gradient(#ccc 0 25%, #fff 0 50%) 0 0 / 6px 6px; border-color: #bfe0e8; }

.docwin { position: absolute; left: 54px; top: 61px; width: 310px; height: 182px; border-width: 3px; border-top: 0; border-radius: 5px 5px 0 0; overflow: hidden; display: flex; flex-direction: column; }
.docwin > header { height: 22px; flex: none; padding: 0 1px 0 3px; }
.docwin h2 { line-height: 22px; }
.docwin > header { gap: 2px; }
.docwin .winbtns { gap: 2px; }
.docwin .winbtns button { width: 15px; height: 15px; }
.docbody { flex: 1; display: grid; grid-template: 11px 1fr / 12px 1fr; background: #fff; }
.docbody text { font: 9px "Liberation Sans", sans-serif; fill: #222; }
.hruler { width: 100%; height: 11px; border-bottom: 1px solid #222; overflow: visible; }
.vruler { width: 12px; height: 100%; border-right: 1px solid #222; }
.corner { border-right: 1px solid #222; border-bottom: 1px solid #222; }
.canvas { background: #ff0; }
.slice { display: flex; gap: 1px; }
.slice b { width: 11px; height: 8px; font: 7px/8px "DejaVu Sans", sans-serif; color: #fff; background: #8c8c78; text-align: center; }
.slice svg { width: 11px; height: 8px; }
.sel { width: 80px; height: 80px; margin: 8px 0 0 24px; }

.toolbox { position: absolute; left: 2px; top: 73px; width: 46px; }
.banner { width: 100%; height: 17px; }
.tools { display: grid; grid-template-columns: 18px 18px; grid-auto-rows: 16px; justify-content: center; column-gap: 1px; padding: 2px 0 1px; border-top: 1px solid #c4c0b0; }
.tools button { position: relative; display: grid; place-items: center; }
.tools svg { width: 14px; height: 14px; }
.tools .m::after { content: ""; position: absolute; right: 1px; bottom: 2px; width: 2px; height: 2px; background: #222; }
.tools .on { background: #fff; box-shadow: 0 0 0 1px #c8c8c8; }
.tools .type { display: flex; justify-content: center; align-items: center; font: bold 13px/14px "Liberation Serif", serif; }
.tools .type svg { width: 3px; height: 12px; }
.swatches { width: 100%; height: 41px; border-top: 1px solid #c4c0b0; }
.masks, .screens { display: flex; justify-content: center; align-items: center; gap: 2px; height: 19px; border-top: 1px solid #c4c0b0; }
.masks button { width: 17px; height: 15px; padding: 1px; border: 1px solid transparent; border-radius: 3px; }
.masks svg { width: 13px; height: 11px; }
.masks .on, .screens .on { border-color: #8cb4d4; background: #fff; }
.screens { gap: 1px; }
.screens button { width: 12px; height: 12px; border: 1px solid transparent; border-radius: 2px; }
.screens svg { width: 10px; height: 10px; }
.jump { display: grid; place-items: center; width: 100%; height: 20px; border-top: 1px solid #c4c0b0; }
.jump svg { width: 32px; height: 14px; }

.flyout { position: absolute; left: 45px; top: 189px; width: 93px; padding: 0 1px 2px; background: #ece9dc; border: 1px solid #fff; border-right-color: #888; border-bottom-color: #888; box-shadow: 1px 1px #5558; }
.flyout li { display: flex; align-items: center; height: 14px; gap: 2px; padding-right: 4px; }
.flyout li.on { background: #fff; }
.flyout i { width: 11px; }
.flyout .on i::before { content: ""; display: block; width: 3px; height: 3px; margin-left: 4px; background: #111; }
.flyout svg { width: 13px; height: 13px; }
.flyout button { white-space: nowrap; }
.flyout kbd { font: inherit; margin-left: auto; }

.status { display: flex; align-items: center; height: 15px; white-space: nowrap; border-top: 1px solid #fff; }
.status input { width: 35px; height: 14px; border: 1px solid #333; background: #fff; padding-left: 4px; margin-right: 4px; }
.size { width: 161px; margin-left: 6px; }
.play { border: 4px solid transparent; border-left: 5px solid #111; border-right: 0; margin-right: 7px; }

.taskbar { display: flex; align-items: center; height: 21px; color: #fff; font-family: "Liberation Serif", "Noto Sans CJK SC", serif; background: linear-gradient(#4a8cf4, #245cdc 15%, #2660e0 85%, #1c48b0); }
.start { display: flex; align-items: center; gap: 5px; width: 71px; height: 21px; padding-left: 7px; border-radius: 0 8px 8px 0; font: italic 14px/20px "Noto Sans CJK SC", sans-serif; text-shadow: 1px 1px #1c4c1c; background: linear-gradient(#68b868, #389438 25%, #38983c 80%, #286c28); }
.start svg { width: 14px; height: 14px; }
.quick { width: 28px; height: 21px; display: grid; place-items: center; }
.quick svg { width: 11px; height: 11px; }
.task { display: flex; align-items: center; gap: 3px; width: 116px; height: 19px; margin-right: 1px; padding-left: 7px; border-radius: 2px; white-space: nowrap; background: linear-gradient(#5c98fa, #3c80f4 20%, #3878ee); }
.task.active { background: #1c4cbc; }
.kbd { width: 12px; height: 10px; margin-left: auto; }
.tray { display: flex; align-items: center; gap: 2px; width: 63px; height: 21px; margin-left: 7px; background: linear-gradient(#40b4f8, #1090ec 20%, #1290ea 80%, #0c6cc0); }
.tray button { width: 12px; height: 12px; }
.tray time { margin-left: 3px; }

.ball { position: absolute; left: -20px; top: 427px; width: 34px; height: 34px; border: 1px solid #e0f4e0; border-radius: 50%; box-shadow: 0 0 3px #333; background: linear-gradient(#50c868, #28a844); color: #fff; font: bold 8px/32px "DejaVu Sans", sans-serif; text-align: right; padding-right: 3px; }

.mark { position: absolute; right: 54px; top: 455px; color: #fff; opacity: .78; pointer-events: none; }
.brand { display: flex; align-items: flex-end; height: 58px; font: bold 39px/34px "Liberation Sans", sans-serif; }
.paw { position: relative; width: 50px; }
.paw svg { width: 50px; height: 58px; }
.paw b { position: absolute; left: 0; right: 0; bottom: 2px; font-size: 22px; line-height: 24px; text-align: center; color: #aaa; }
.cn { font: bold 31px/32px "Noto Sans CJK SC", sans-serif; margin-left: 3px; }
.url { font: 20px/26px "Noto Sans", sans-serif; }
```
